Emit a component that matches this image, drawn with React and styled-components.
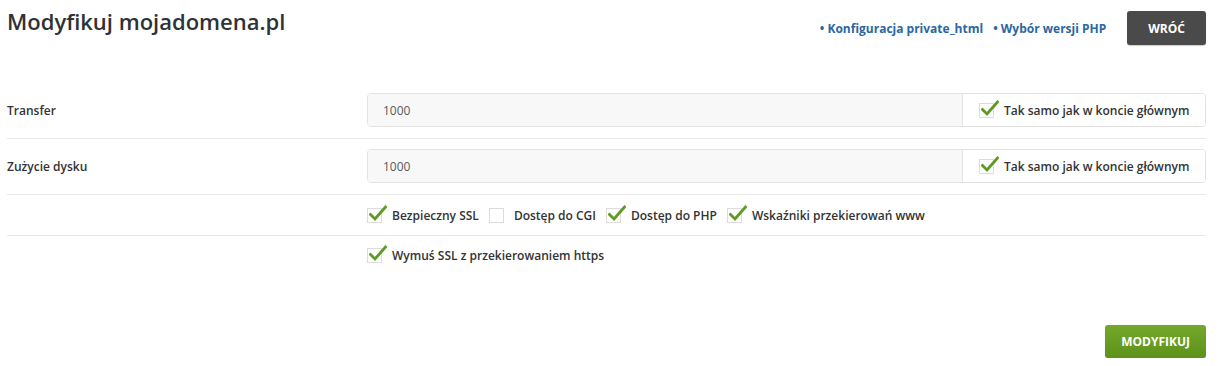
import React from "react";
import styled, { createGlobalStyle } from "styled-components";

const Global = createGlobalStyle`
  html, body { margin: 0; padding: 0; background: #fff; }
  body { font-family: "Open Sans", "Liberation Sans", sans-serif; color: #333; }
  * { box-sizing: border-box; }
`;

const Page = styled.div`
  padding: 0 12px 0 7px;
  width: 1218px;
`;

const Header = styled.div`
  display: flex;
  justify-content: space-between;
  align-items: flex-start;
`;

const Title = styled.h1`
  margin: 0;
  padding-top: 6px;
  font-size: 22px;
  line-height: 30px;
  font-weight: 600;
  color: #2f3236;
`;

const Actions = styled.div`
  display: flex;
  align-items: center;
  margin-top: 11px;
`;

const NavLink = styled.a`
  font-size: 12px;
  font-weight: 700;
  color: #2a67a3;
  text-decoration: none;
  margin-right: ${(p) => p.$gap}px;
`;

const Button = styled.button`
  height: ${(p) => p.$h}px;
  padding: 0 ${(p) => p.$px}px;
  border: none;
  border-radius: 3px;
  font-family: inherit;
  font-size: 12px;
  font-weight: 700;
  color: #fff;
  background: ${(p) => p.$bg};
  box-shadow: 0 1px 1px rgba(0,0,0,0.2);
`;

const Form = styled.div`
  margin-top: 38px;
`;

const Row = styled.div`
  display: grid;
  grid-template-columns: 360px 1fr;
  align-items: center;
  padding: ${(p) => p.$pt}px 0 ${(p) => p.$pb}px;
  border-bottom: ${(p) => (p.$last ? "none" : "1px solid #e8e8e8")};
`;

const Label = styled.div`
  font-size: 12px;
  font-weight: 600;
  color: #333;
`;

const Group = styled.div`
  display: flex;
  height: 34px;
  border: 1px solid #e3e3e3;
  border-radius: 4px;
  overflow: hidden;
`;

const Input = styled.div`
  flex: 1;
  background: #f8f8f9;
  padding-left: 15px;
  display: flex;
  align-items: center;
  font-size: 12px;
  color: #5a5a5a;
`;

const Addon = styled.div`
  width: 243px;
  border-left: 1px solid #e3e3e3;
  background: #fff;
  display: flex;
  align-items: center;
  padding-left: 16px;
`;

const Checks = styled.div`
  display: flex;
  align-items: center;
`;

const CheckItem = styled.label`
  display: flex;
  align-items: center;
  height: 18px;
  margin-right: ${(p) => p.$mr}px;
  font-size: 12px;
  font-weight: 600;
  color: #333;
`;

const Box = styled.span`
  position: relative;
  width: 15px;
  height: 15px;
  border: 1px solid #dcdcdc;
  background: #fff;
  margin-right: 10px;
  flex: none;
  svg {
    position: absolute;
    left: 1px;
    top: -4px;
  }
`;

const Footer = styled.div`
  display: flex;
  justify-content: flex-end;
  margin-top: 50px;
`;

const Check = ({ on }) => (
  <Box>
    {on && (
      <svg width="18" height="17" viewBox="0 0 18 17">
        <path d="M1.5 9.5 L6 14 L16.5 2" fill="none" stroke="#5f9a22" strokeWidth="2.8" strokeLinecap="square" />
      </svg>
    )}
  </Box>
);

const Field = ({ label, value }) => (
  <Row $pt={10} $pb={11}>
    <Label>{label}</Label>
    <Group>
      <Input>{value}</Input>
      <Addon>
        <CheckItem $mr={0}>
          <Check on />
          Tak samo jak w koncie głównym
        </CheckItem>
      </Addon>
    </Group>
  </Row>
);

export default function App() {
  return (
    <Page>
      <Global />
      <Header>
        <Title>Modyfikuj mojadomena.pl</Title>
        <Actions>
          <NavLink href="#" $gap={10}>• Konfiguracja private_html</NavLink>
          <NavLink href="#" $gap={21}>• Wybór wersji PHP</NavLink>
          <Button $h={34} $px={21} $bg="#4a4a4a">WRÓĆ</Button>
        </Actions>
      </Header>
      <Form>
        <Field label="Transfer" value="1000" />
        <Field label="Zużycie dysku" value="1000" />
        <Row $pt={11} $pb={11}>
          <div />
          <Checks>
            <CheckItem $mr={10}><Check on />Bezpieczny SSL</CheckItem>
            <CheckItem $mr={10}><Check />Dostęp do CGI</CheckItem>
            <CheckItem $mr={10}><Check on />Dostęp do PHP</CheckItem>
            <CheckItem $mr={0}><Check on />Wskaźniki przekierowań www</CheckItem>
          </Checks>
        </Row>
        <Row $pt={10} $pb={11} $last>
          <div />
          <Checks>
            <CheckItem $mr={0}><Check on />Wymuś SSL z przekierowaniem https</CheckItem>
          </Checks>
        </Row>
      </Form>
      <Footer>
        <Button $h={33} $px={16} $bg="linear-gradient(#74a82a, #5e911b)">MODYFIKUJ</Button>
      </Footer>
    </Page>
  );
}
